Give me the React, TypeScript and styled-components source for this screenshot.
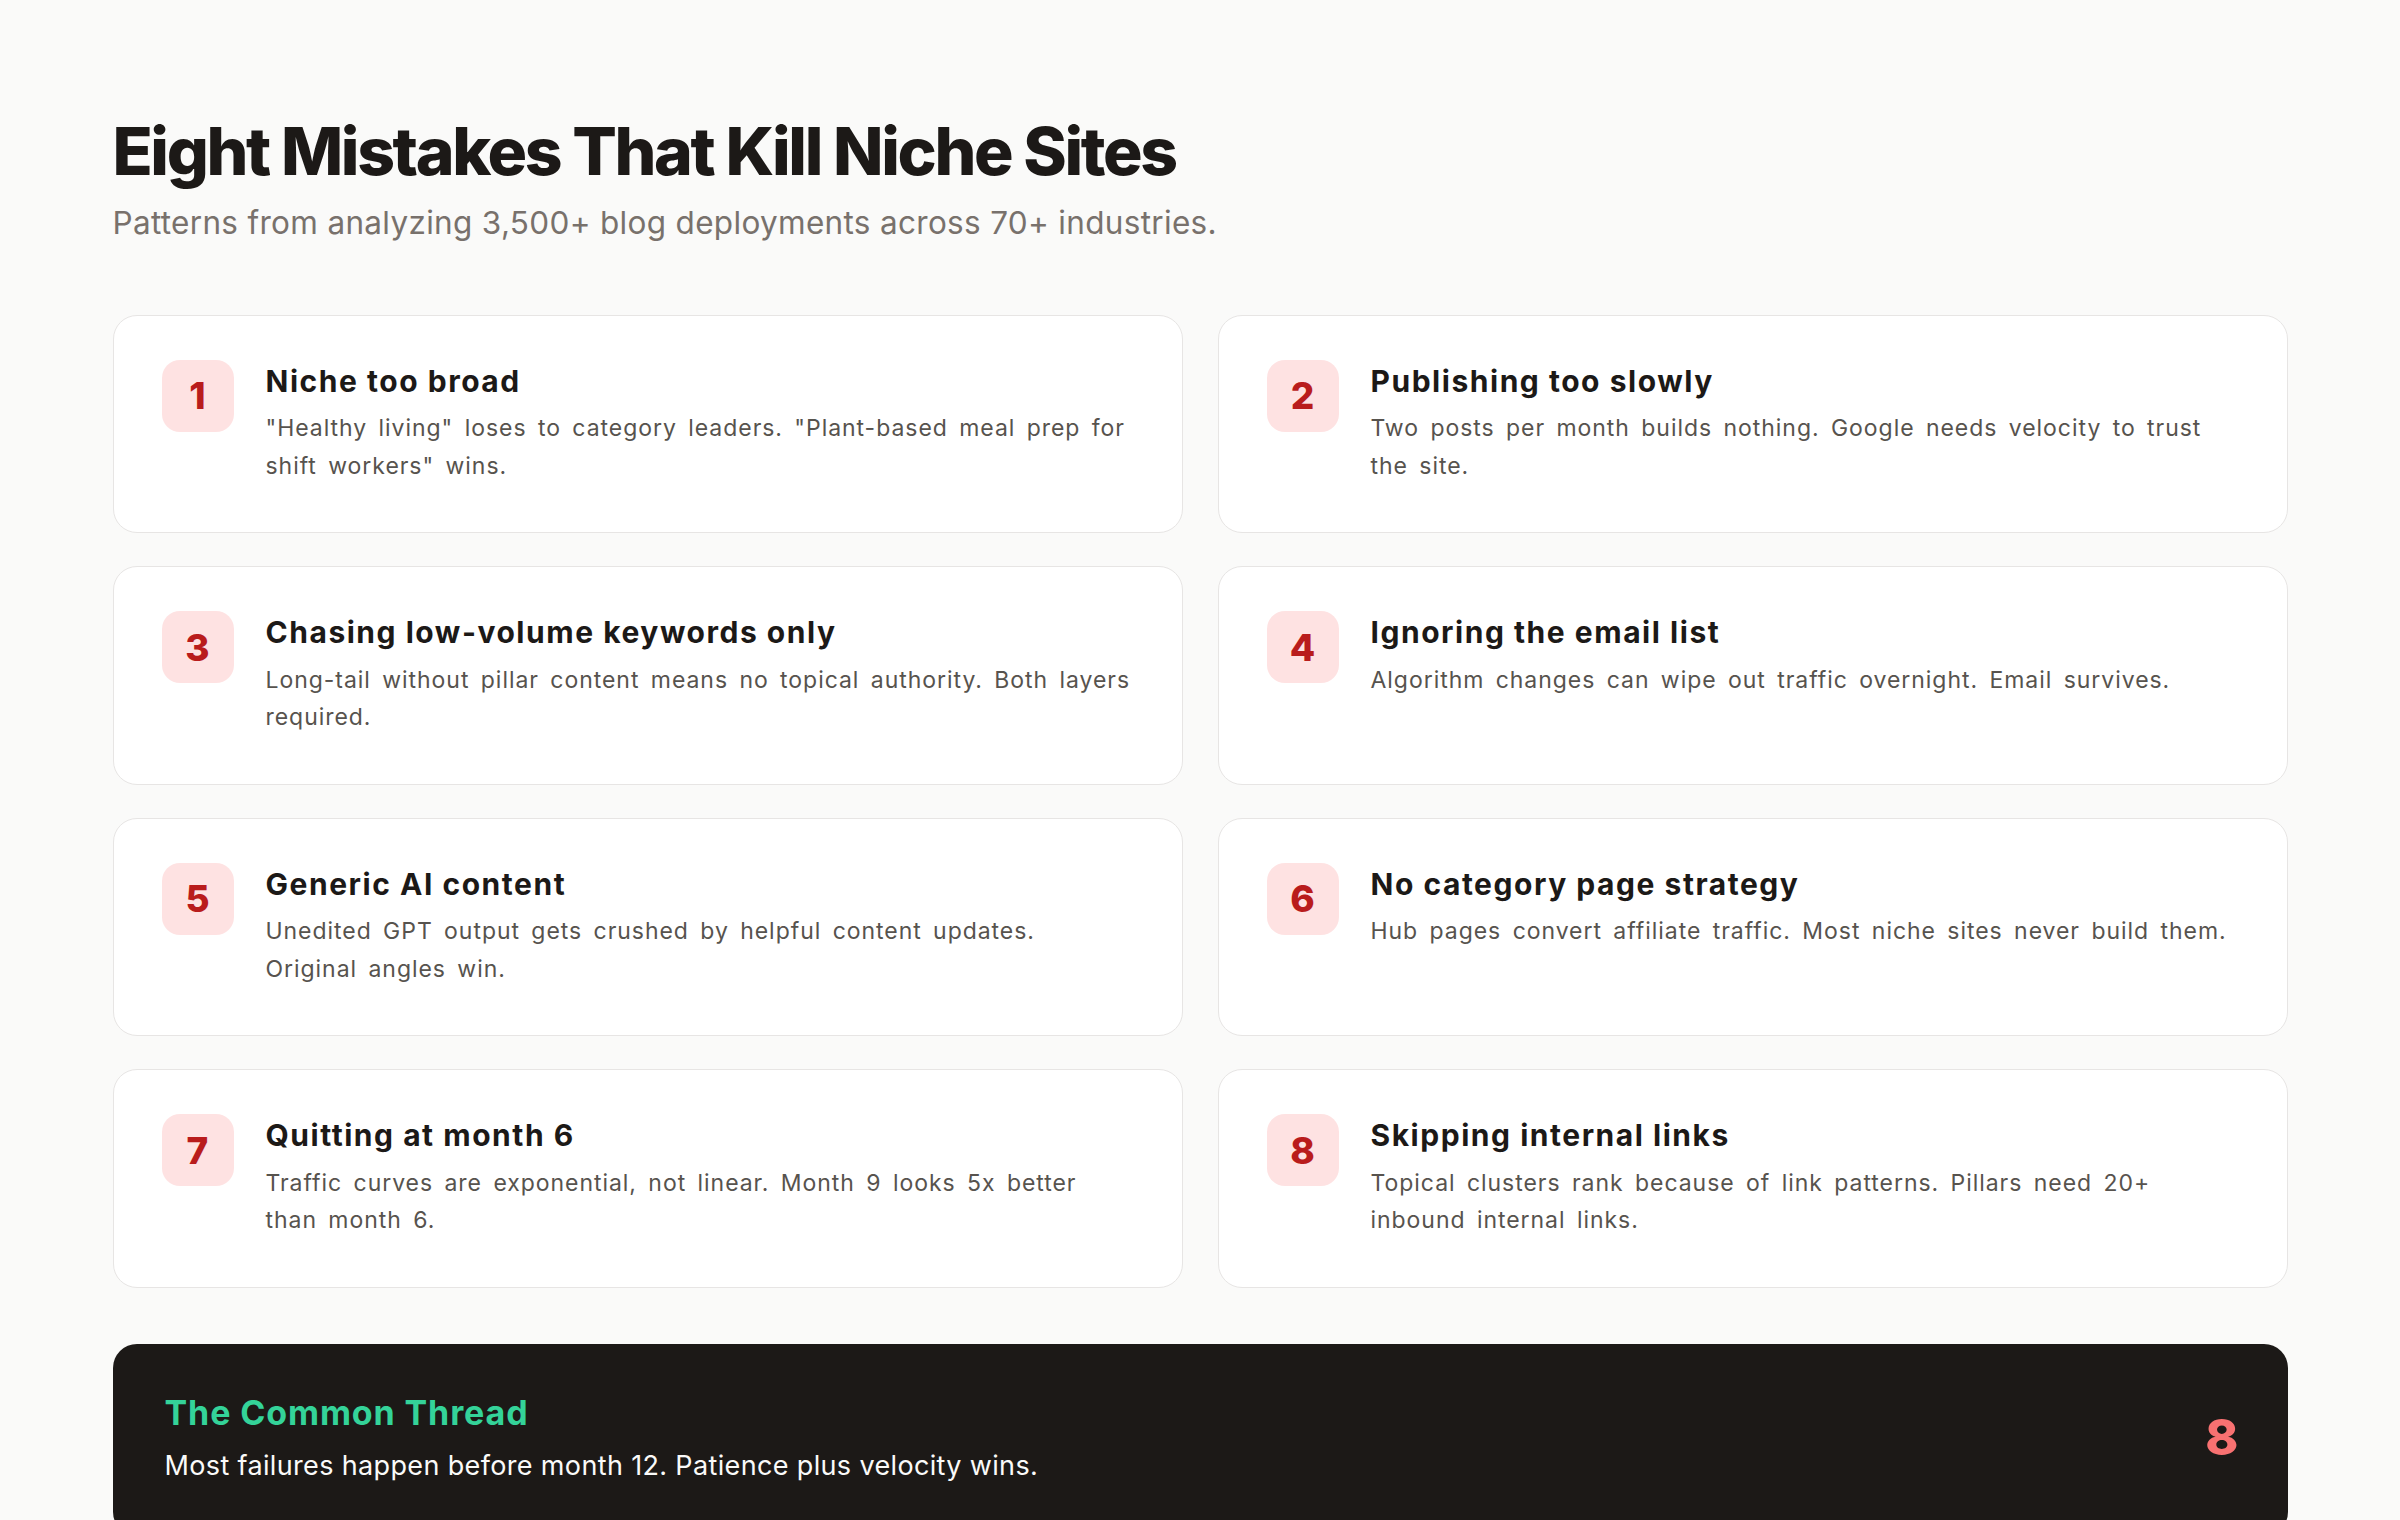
import React from 'react'
import styled, { createGlobalStyle } from 'styled-components'

const GlobalStyle = createGlobalStyle`
  html, body {
    margin: 0;
    padding: 0;
    background: #fafaf9;
  }
  body {
    font-family: Inter, "Noto Sans", "Liberation Sans", sans-serif;
    -webkit-font-smoothing: antialiased;
  }
  * {
    box-sizing: border-box;
  }
`

const Page = styled.main`
  padding: 115px 112.5px 0;
  min-height: 1520px;
  overflow: hidden;
`

const Title = styled.h1`
  margin: 0;
  font-size: 66px;
  line-height: 1.1;
  font-weight: 800;
  letter-spacing: -0.036em;
  color: #1c1917;
`

const Subtitle = styled.p`
  margin: 11px 0 0;
  font-size: 31.5px;
  line-height: 1.5;
  letter-spacing: 0.01em;
  color: #78716c;
`

const Grid = styled.section`
  display: grid;
  grid-template-columns: 1fr 1fr;
  gap: 33px 35px;
  margin-top: 69px;
`

const Card = styled.article`
  display: flex;
  align-items: flex-start;
  gap: 32px;
  padding: 44px 49px 47.5px 48px;
  background: #ffffff;
  border: 1.5px solid #e7e5e4;
  border-radius: 24px;
`

const Badge = styled.div`
  flex: 0 0 72px;
  height: 72px;
  display: flex;
  align-items: center;
  justify-content: center;
  border-radius: 18px;
  background: #fee2e2;
  color: #b91c1c;
  font-size: 37px;
  font-weight: 800;
`

const CardBody = styled.div`
  flex: 1;
  min-width: 0;
`

const CardTitle = styled.h3`
  margin: 0;
  font-size: 30px;
  line-height: 1.4;
  font-weight: 700;
  letter-spacing: 0.051em;
  color: #1c1917;
`

const CardText = styled.p`
  margin: 8.5px 0 0;
  font-size: 23px;
  line-height: 1.62;
  letter-spacing: 0.0415em;
  word-spacing: 4px;
  color: #57534e;
`

const Thread = styled.section`
  display: flex;
  align-items: center;
  justify-content: space-between;
  margin-top: 56.5px;
  padding: 49px 49px 49px 52px;
  background: #1c1917;
  border-radius: 24px;
`

const ThreadTitle = styled.h2`
  margin: 0;
  font-size: 34px;
  line-height: 1.2;
  font-weight: 700;
  letter-spacing: 0.026em;
  color: #34d399;
`

const ThreadText = styled.p`
  margin: 12px 0 0;
  font-size: 27px;
  line-height: 1.5;
  letter-spacing: 0.013em;
  color: #fafaf9;
`

const ThreadCount = styled.div`
  padding-bottom: 6px;
  font-size: 50px;
  font-weight: 800;
  line-height: 1;
  color: #f87171;
`

const mistakes = [
  {
    title: 'Niche too broad',
    text: '"Healthy living" loses to category leaders. "Plant-based meal prep for shift workers" wins.'
  },
  {
    title: 'Publishing too slowly',
    text: 'Two posts per month builds nothing. Google needs velocity to trust the site.'
  },
  {
    title: 'Chasing low-volume keywords only',
    text: 'Long-tail without pillar content means no topical authority. Both layers required.'
  },
  {
    title: 'Ignoring the email list',
    text: 'Algorithm changes can wipe out traffic overnight. Email survives.'
  },
  {
    title: 'Generic AI content',
    text: 'Unedited GPT output gets crushed by helpful content updates. Original angles win.'
  },
  {
    title: 'No category page strategy',
    text: 'Hub pages convert affiliate traffic. Most niche sites never build them.'
  },
  {
    title: 'Quitting at month 6',
    text: 'Traffic curves are exponential, not linear. Month 9 looks 5x better than month 6.'
  },
  {
    title: 'Skipping internal links',
    text: 'Topical clusters rank because of link patterns. Pillars need 20+ inbound internal links.'
  }
]

const App = () => {
  return (
    <>
      <GlobalStyle />
      <Page>
        <Title>Eight Mistakes That Kill Niche Sites</Title>
        <Subtitle>
          Patterns from analyzing 3,500+ blog deployments across 70+ industries.
        </Subtitle>
        <Grid>
          {mistakes.map((item, idx) => (
            <Card key={`mistake_${idx}`}>
              <Badge>{idx + 1}</Badge>
              <CardBody>
                <CardTitle>{item.title}</CardTitle>
                <CardText>{item.text}</CardText>
              </CardBody>
            </Card>
          ))}
        </Grid>
        <Thread>
          <div>
            <ThreadTitle>The Common Thread</ThreadTitle>
            <ThreadText>
              Most failures happen before month 12. Patience plus velocity wins.
            </ThreadText>
          </div>
          <ThreadCount>{mistakes.length}</ThreadCount>
        </Thread>
      </Page>
    </>
  )
}

export default App
